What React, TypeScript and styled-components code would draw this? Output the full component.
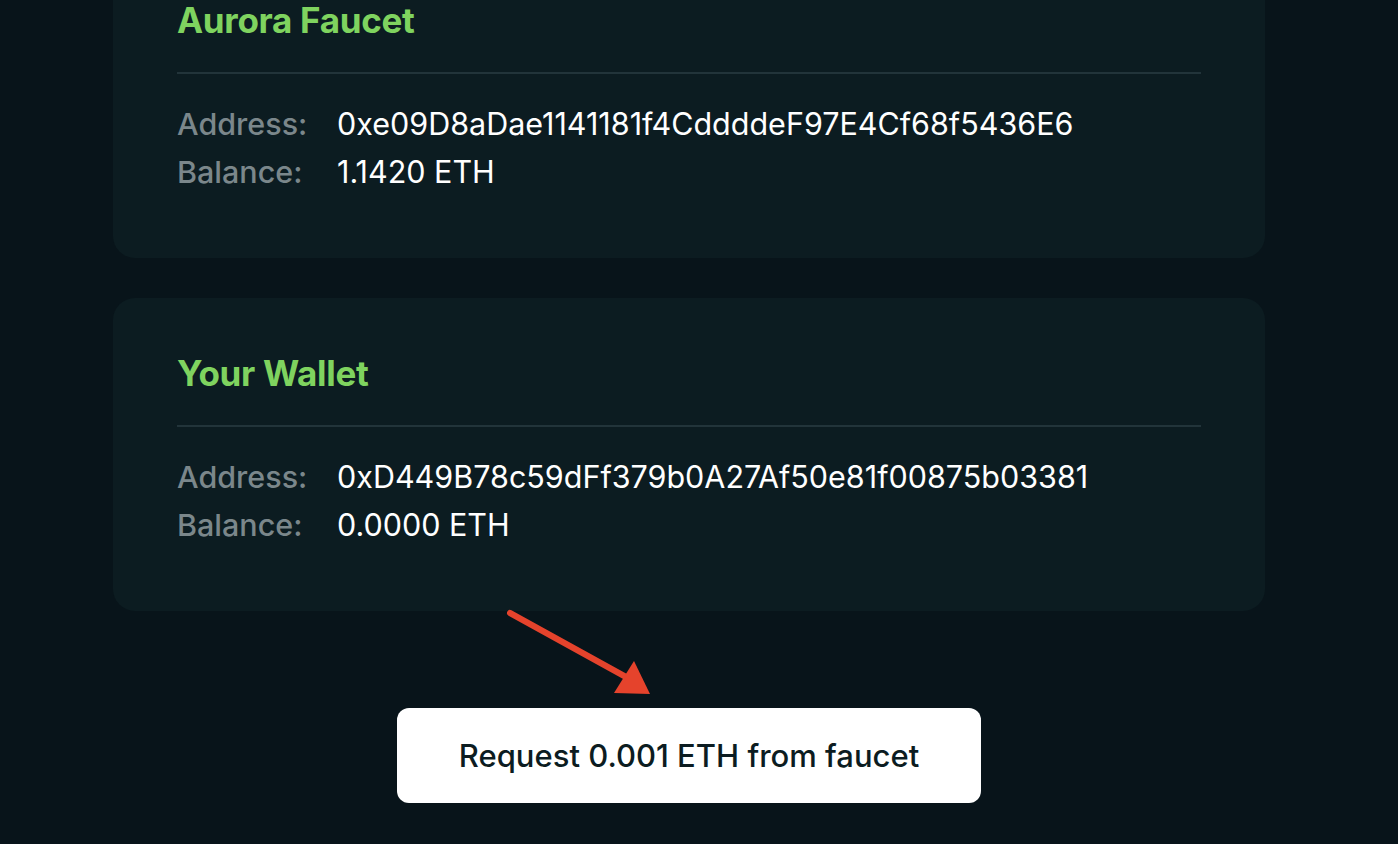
import styled, { createGlobalStyle } from "styled-components";

const GlobalStyle = createGlobalStyle`
  html, body {
    margin: 0;
    padding: 0;
    background: #08141a;
    font-family: Inter, "Open Sans", sans-serif;
    -webkit-font-smoothing: antialiased;
  }
`;

declare interface AccountCardProps {
    title: string;
    address: string;
    balance: string;
}

function AccountCard(props: AccountCardProps): React.ReactElement {
    return (
        <Card>
            <Title>{props.title}</Title>
            <Divider />
            <Rows>
                <Label>Address:</Label>
                <Value>{props.address}</Value>
                <Label>Balance:</Label>
                <Value>{props.balance}</Value>
            </Rows>
        </Card>
    );
}

function App(): React.ReactElement {
    return (
        <>
            <GlobalStyle />
            <Page>
                <AccountCard
                    title="Aurora Faucet"
                    address="0xe09D8aDae1141181f4CddddeF97E4Cf68f5436E6"
                    balance="1.1420 ETH"
                />
                <AccountCard
                    title="Your Wallet"
                    address="0xD449B78c59dFf379b0A27Af50e81f00875b03381"
                    balance="0.0000 ETH"
                />
                <ButtonArea>
                    {/* red annotation arrow pointing at the button */}
                    <Arrow width="160" height="100" viewBox="0 0 160 100">
                        <line x1="14" y1="15" x2="130" y2="79" stroke="#e5432c" strokeWidth="6" strokeLinecap="round" />
                        <polygon points="154,96 118,95 138,63" fill="#e5432c" />
                    </Arrow>
                    <RequestButton>Request 0.001 ETH from faucet</RequestButton>
                </ButtonArea>
            </Page>
        </>
    );
}

export default App;

const Page = styled.div`
  display: flex;
  flex-direction: column;
  align-items: center;
  gap: 40px;
  margin-top: -55px;
  padding: 0 20px 40px 0;
`;

const Card = styled.div`
  box-sizing: border-box;
  width: 1152px;
  padding: 53px 64px 62px;
  background: #0c1c21;
  border-radius: 22px;
`;

const Title = styled.div`
  font-size: 35px;
  font-weight: 700;
  line-height: 44px;
  color: #7fd35f;
  letter-spacing: -0.3px;
`;

const Divider = styled.div`
  height: 2px;
  background: #22343a;
  margin: 30px 0 26px;
`;

const Rows = styled.div`
  display: grid;
  grid-template-columns: 160px 1fr;
  font-size: 30.5px;
  line-height: 48px;
`;

const Label = styled.span`
  color: #7b878b;
  font-weight: 500;
`;

const Value = styled.span`
  color: #ffffff;
  font-weight: 400;
`;

const ButtonArea = styled.div`
  position: relative;
  padding-top: 57px;
`;

const Arrow = styled.svg`
  position: absolute;
  left: 99px;
  top: -53px;
`;

const RequestButton = styled.button`
  width: 584px;
  height: 95px;
  border: none;
  border-radius: 12px;
  background: #ffffff;
  color: #0c1c21;
  font-family: Inter, "Open Sans", sans-serif;
  font-size: 31px;
  font-weight: 500;
  cursor: pointer;
`;
